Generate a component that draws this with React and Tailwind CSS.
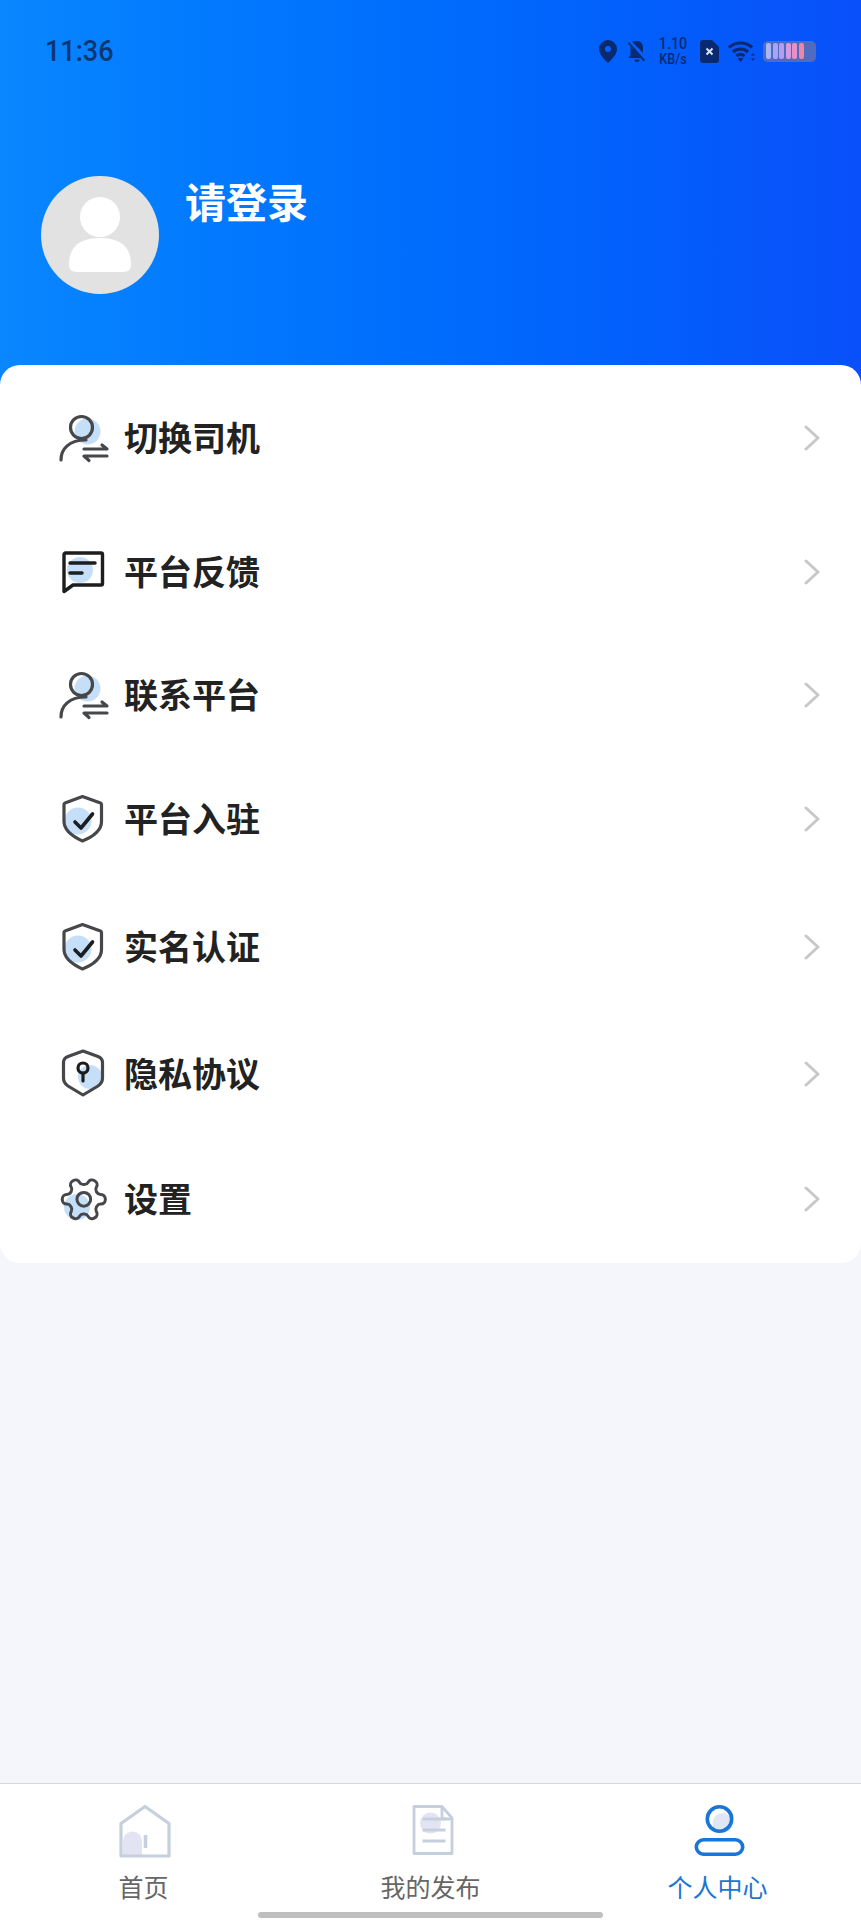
const cjk = "font-['Noto_Sans_CJK_SC','Noto_Sans',sans-serif]";

function PersonSwap() {
  return (
    <svg width="60" height="60" viewBox="0 0 60 60" fill="none" stroke="#45474a" strokeWidth="3.200" strokeLinecap="round" strokeLinejoin="round">
      <circle cx="37.500" cy="23.500" r="13" fill="#c6dff8" stroke="none" />
      <circle cx="31.500" cy="19.500" r="11" />
      <path d="M11 52c0-11 8-20 25-20" />
      <path d="M34 41h23l-5-4" />
      <path d="M57 48H34l5 4.500" />
    </svg>
  );
}

function Feedback() {
  return (
    <svg width="60" height="60" viewBox="0 0 60 60" fill="none" stroke="#1c1d1f" strokeWidth="3.400" strokeLinecap="round" strokeLinejoin="round">
      <circle cx="30" cy="28" r="13" fill="#c6dff8" stroke="none" />
      <path d="M15 11h36a1.500 1.500 0 0 1 1.500 1.500v29a1.500 1.500 0 0 1-1.500 1.500H23l-9 6.500V12.500A1.500 1.500 0 0 1 15 11z" />
      <path d="M20 21h25" />
      <path d="M20 31h12" />
    </svg>
  );
}

function ShieldCheck() {
  return (
    <svg width="60" height="60" viewBox="0 0 60 60" fill="none" stroke="#45474a" strokeWidth="3.200" strokeLinecap="round" strokeLinejoin="round">
      <circle cx="28" cy="32" r="13.500" fill="#c6dff8" stroke="none" />
      <path d="M32.500 7.500l18 6.500a1.500 1.500 0 0 1 1 1.500v17c0 8-8 15-19 19.500C21.500 47 14 40 14 32.500v-17a1.500 1.500 0 0 1 1-1.500z" />
      <path d="M25 33l6 6 11.500-14" stroke="#1c1d1f" strokeWidth="3.600" />
    </svg>
  );
}

function ShieldKey() {
  return (
    <svg width="60" height="60" viewBox="0 0 60 60" fill="none" stroke="#45474a" strokeWidth="3.200" strokeLinecap="round" strokeLinejoin="round">
      <circle cx="40" cy="33" r="12" fill="#c6dff8" stroke="none" />
      <path d="M33 7l15 5.500c3 1.200 4.500 3 4.500 6V34c0 3.500-1.500 6-4.500 8l-15 9-15-9c-3-2-4.500-4.500-4.500-8V18.500c0-3 1.500-4.800 4.500-6z" />
      <circle cx="33" cy="24" r="5" stroke="#1c1d1f" />
      <path d="M33 29v8" stroke="#1c1d1f" />
    </svg>
  );
}

function Gear() {
  return (
    <svg width="60" height="60" viewBox="0 0 60 60" fill="none" stroke="#45474a" strokeWidth="3" strokeLinecap="round" strokeLinejoin="round">
      <circle cx="27" cy="38" r="13" fill="#c6dff8" stroke="none" />
      <g transform="translate(8 4.500) scale(2.150) rotate(90 12 12)" strokeWidth="1.400">
        <path d="M12.220 2h-.44a2 2 0 0 0-2 2v.18a2 2 0 0 1-1 1.730l-.43.25a2 2 0 0 1-2 0l-.15-.08a2 2 0 0 0-2.730.73l-.22.38a2 2 0 0 0 .73 2.730l.15.1a2 2 0 0 1 1 1.720v.51a2 2 0 0 1-1 1.740l-.15.09a2 2 0 0 0-.73 2.730l.22.38a2 2 0 0 0 2.730.73l.15-.08a2 2 0 0 1 2 0l.43.25a2 2 0 0 1 1 1.730V20a2 2 0 0 0 2 2h.44a2 2 0 0 0 2-2v-.18a2 2 0 0 1 1-1.730l.43-.25a2 2 0 0 1 2 0l.15.08a2 2 0 0 0 2.730-.73l.22-.39a2 2 0 0 0-.73-2.730l-.15-.08a2 2 0 0 1-1-1.740v-.5a2 2 0 0 1 1-1.740l.15-.09a2 2 0 0 0 .73-2.730l-.22-.38a2 2 0 0 0-2.730-.73l-.15.08a2 2 0 0 1-2 0l-.43-.25a2 2 0 0 1-1-1.730V4a2 2 0 0 0-2-2z" />
        <circle cx="12" cy="12" r="3.200" />
      </g>
    </svg>
  );
}

function Chevron() {
  return (
    <svg width="16" height="26" viewBox="0 0 16 26" fill="none" stroke="#c8c8c8" strokeWidth="3" strokeLinecap="round" strokeLinejoin="round">
      <path d="M2 2l12 11L2 24" />
    </svg>
  );
}

function StatusIcons() {
  const cells = ["bg-[#a9b6f6]", "bg-[#a7a4f6]", "bg-[#b49cf0]", "bg-[#d29be2]", "bg-[#e692c6]", "bg-[#ee86a8]"];
  return (
    <div className="flex items-center text-[#0a2a70]">
      <svg width="18" height="23" viewBox="0 0 18 23" fill="currentColor">
        <path fillRule="evenodd" d="M9 0a9 9 0 0 1 9 9c0 5-5 10.500-9 14C5 19.500 0 14 0 9a9 9 0 0 1 9-9zm0 6a3 3 0 1 0 0 6 3 3 0 0 0 0-6z" />
      </svg>
      <svg className="ml-[10px]" width="20" height="23" viewBox="0 0 20 23" fill="currentColor">
        <path d="M2 2l16 18-1.500 1.500L1 3.500z" />
        <path d="M10 1c4 0 6 3 6 7v5L5 1.500C6.500 1.200 8 1 10 1zM3.500 6.500L14 18H1.500l2-3zM7.500 19.500h5a2.500 2.500 0 0 1-5 0z" />
      </svg>
      <div className="ml-[11px] flex w-[30px] scale-x-[0.9] flex-col items-center font-['Roboto',sans-serif] font-medium">
        <span className="block text-[16px] leading-[16px]">1.10</span>
        <span className="block text-[14px] leading-[14px]">KB/s</span>
      </div>
      <svg className="ml-[12px]" width="19" height="23" viewBox="0 0 19 23">
        <path fill="currentColor" d="M3 0h9l7 7v13a3 3 0 0 1-3 3H3a3 3 0 0 1-3-3V3a3 3 0 0 1 3-3z" />
        <path stroke="#d8e0f6" strokeWidth="2" d="M6.500 8.500l6 6M12.500 8.500l-6 6" />
      </svg>
      <svg className="ml-[9px]" width="27" height="21" viewBox="0 0 27 21" fill="none" stroke="currentColor" strokeWidth="3.200">
        <path d="M1 6.500c6.500-6 17-6 23 0" />
        <path d="M5 11c4-3.800 11-3.800 15 0" />
        <path d="M8.500 15c2.400-2 5.600-2 8 0" />
        <path fill="currentColor" stroke="none" d="M12.500 21l-3-3.500c1.700-1 4.300-1 6 0z" />
        <path fill="currentColor" stroke="none" d="M25 12l2 2.500h-4zM25 20l-2-2.500h4z" />
      </svg>
      <div className="ml-[8px] flex h-[21px] w-[53px] items-center gap-[1.500px] rounded-[5px] bg-[#4f6cc0] px-[3px]">
        {cells.map((c) => (
          <span key={c} className={`h-[16px] w-[5px] rounded-[2px] ${c}`} />
        ))}
      </div>
    </div>
  );
}

const menu = [
  { label: "切换司机", Icon: PersonSwap, h: "h-[146px]" },
  { label: "平台反馈", Icon: Feedback, h: "h-[122px]" },
  { label: "联系平台", Icon: PersonSwap, h: "h-[124px]" },
  { label: "平台入驻", Icon: ShieldCheck, h: "h-[124px]" },
  { label: "实名认证", Icon: ShieldCheck, h: "h-[132px]" },
  { label: "隐私协议", Icon: ShieldKey, h: "h-[122px]" },
  { label: "设置", Icon: Gear, h: "h-[128px]" },
];

function HomeIcon() {
  return (
    <svg width="54" height="54" viewBox="0 0 54 54" fill="none" stroke="#c5cfdd" strokeWidth="3.200" strokeLinejoin="round">
      <path fill="#e2e4f3" stroke="none" d="M6 52V37a9.500 9.500 0 0 1 19 0v15z" />
      <path d="M28 2.500L52 19.500V52H4V19.500z" />
      <path d="M28.500 31v13" strokeWidth="3.600" />
    </svg>
  );
}

function DocIcon() {
  return (
    <svg width="46" height="54" viewBox="0 0 46 54" fill="none" stroke="#c5cfdd" strokeWidth="2.800" strokeLinejoin="round">
      <circle cx="22.500" cy="19" r="10.500" fill="#e2e4f3" stroke="none" />
      <path d="M6 2.500h28l10 11.500v35.500H6z" />
      <path d="M34 2.500V15h10" />
      <path d="M14.500 15h23M14.500 26h23M14.500 37h23" />
    </svg>
  );
}

function UserIcon() {
  return (
    <svg width="54" height="54" viewBox="0 0 54 54" fill="none" stroke="#1976d8" strokeWidth="3.600">
      <circle cx="31.500" cy="19" r="10" fill="#e0e6f4" stroke="none" />
      <circle cx="28.500" cy="15" r="12.200" />
      <rect x="5.300" y="35.800" width="46.400" height="14.400" rx="7.200" />
    </svg>
  );
}

const tabs = [
  { label: "首页", Icon: HomeIcon, color: "text-[#666666]" },
  { label: "我的发布", Icon: DocIcon, color: "text-[#666666]" },
  { label: "个人中心", Icon: UserIcon, color: "text-[#1976d2]" },
];

export default function App() {
  return (
    <div className={`relative flex h-[1920px] w-[861px] flex-col overflow-hidden bg-[#f4f6fb] ${cjk}`}>
      <div className="h-[385px] shrink-0 bg-gradient-to-r from-[#0a86ff] to-[#0a4ffa]">
        <div className="flex items-center justify-between pl-[45px] pr-[45px] pt-[36px]">
          <span className="origin-left scale-x-[0.9] font-['Roboto',sans-serif] text-[30px] font-medium leading-[30px] text-[#0c3670]">11:36</span>
          <StatusIcons />
        </div>
        <div className="mt-[110px] flex items-start pl-[41px]">
          <div className="h-[118px] w-[118px] shrink-0 overflow-hidden rounded-full bg-[#e2e2e2]">
            <svg width="118" height="118" viewBox="0 0 118 118" fill="#ffffff">
              <ellipse cx="59" cy="41" rx="20" ry="20" />
              <path d="M28 88c0-18 12-26 31-26s31 8 31 26c0 5-2 8-8 8H36c-6 0-8-3-8-8z" />
            </svg>
          </div>
          <span className="-mt-[2px] ml-[26px] text-[41px] font-bold leading-[52px] text-white">请登录</span>
        </div>
      </div>

      <div className="-mt-[20px] shrink-0 rounded-[20px] bg-white">
        {menu.map(({ label, Icon, h }) => (
          <div key={label} className={`flex items-center pl-[50px] pr-[41px] ${h}`}>
            <Icon />
            <span className="mb-[2px] ml-[14px] flex-1 text-[34px] font-bold leading-[44px] text-[#222222]">{label}</span>
            <Chevron />
          </div>
        ))}
      </div>

      <div className="mt-auto flex h-[137px] shrink-0 border-t border-[#d5d8dc] bg-white pt-[20px]">
        {tabs.map(({ label, Icon, color }) => (
          <div key={label} className="flex flex-1 flex-col items-center">
            <Icon />
            <span className={`mt-[11px] text-[25px] leading-[34px] ${color}`}>{label}</span>
          </div>
        ))}
      </div>
      <div className="absolute bottom-[2px] left-[258px] h-[6px] w-[345px] rounded-full bg-[#bfbfbf]" />
    </div>
  );
}
